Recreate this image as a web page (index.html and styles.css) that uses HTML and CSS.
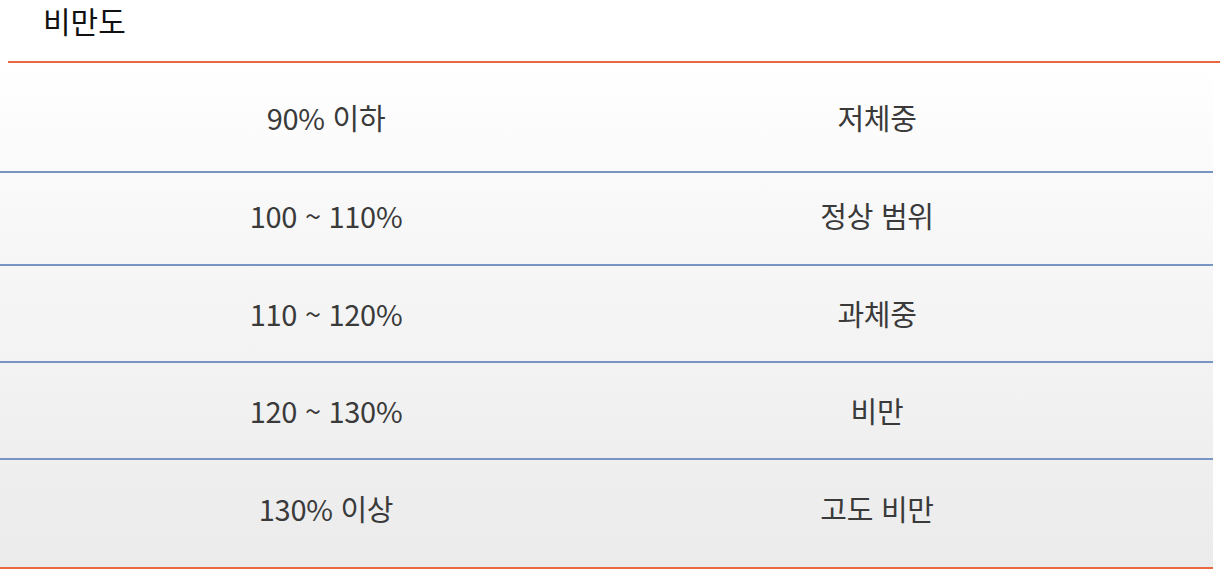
FILE: index.html
```html
<!DOCTYPE html>
<html lang="ko">
<head>
<meta charset="utf-8">
<title>비만도</title>
<link rel="stylesheet" href="styles.css">
</head>
<body>
<div class="page">
  <h2 class="title">비만도</h2>
  <div class="table">
    <div class="row"><div class="cell">90% 이하</div><div class="cell">저체중</div></div>
    <div class="row"><div class="cell">100 ~ 110%</div><div class="cell">정상 범위</div></div>
    <div class="row"><div class="cell">110 ~ 120%</div><div class="cell">과체중</div></div>
    <div class="row"><div class="cell">120 ~ 130%</div><div class="cell">비만</div></div>
    <div class="row"><div class="cell">130% 이상</div><div class="cell">고도 비만</div></div>
  </div>
</div>
</body>
</html>
```

FILE: styles.css
```css
html, body {
  margin: 0;
  padding: 0;
  background: #ffffff;
}
.page {
  width: 1222px;
  height: 570px;
  font-family: "Noto Sans CJK KR", "Noto Sans", sans-serif;
}
.title {
  margin: 0 2px 0 8px;
  height: 63px;
  box-sizing: border-box;
  padding: 0 0 0 35px;
  border-bottom: 2px solid #e9683f;
  font-size: 30px;
  font-weight: 400;
  line-height: 40px;
  color: #111111;
}
.table {
  width: 1213px;
  background: linear-gradient(to bottom, #ffffff 0%, #f8f8f8 30%, #ebebeb 100%);
  border-bottom: 2px solid #e9683f;
}
.row {
  display: grid;
  grid-template-columns: 652px 450px 1fr;
  align-items: center;
  box-sizing: border-box;
  border-bottom: 2px solid #7895c2;
}
.row:last-child {
  border-bottom: none;
}
.row:nth-child(1) { height: 110px; }
.row:nth-child(2) { height: 93px; padding-bottom: 8px; }
.row:nth-child(3) { height: 97px; padding-bottom: 2px; }
.row:nth-child(4) { height: 97px; padding-bottom: 2px; }
.row:nth-child(5) { height: 107px; padding-bottom: 12px; }
.cell {
  text-align: center;
  font-size: 29px;
  font-weight: 400;
  color: #3a3a3a;
  line-height: 36px;
  letter-spacing: -0.3px;
}
```
